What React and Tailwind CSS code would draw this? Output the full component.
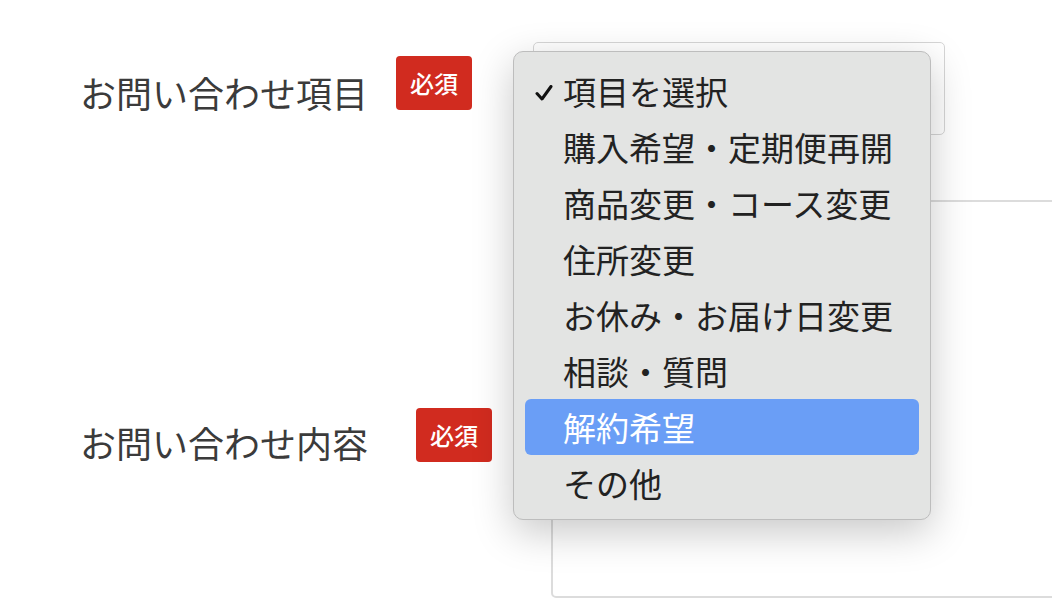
const items = [
  "項目を選択",
  "購入希望・定期便再開",
  "商品変更・コース変更",
  "住所変更",
  "お休み・お届け日変更",
  "相談・質問",
  "解約希望",
  "その他",
];

function Badge({ className }) {
  return (
    <span
      className={`flex h-[54px] w-[76px] shrink-0 items-center justify-center rounded-[4px] bg-[#d12b1f] text-[24px] font-medium text-white ${className}`}
    >
      必須
    </span>
  );
}

export default function App() {
  return (
    <div
      className="relative h-[598px] w-[1052px] overflow-hidden bg-white text-[#3b3b3b]"
      style={{ fontFamily: '"Noto Sans CJK JP", "Noto Sans", sans-serif' }}
    >
      {/* row 1 */}
      <div className="mt-[42px] flex items-start">
        <div className="flex w-[533px] shrink-0 items-start pl-[80px]">
          <span className="mt-[24px] text-[36px] leading-[52px]">お問い合わせ項目</span>
          <Badge className="ml-[28px] mt-[14px]" />
        </div>
        <div className="h-[93px] w-[412px] shrink-0 rounded-[5px] border border-[#d6d6d6] bg-white" />
      </div>

      {/* row 2 */}
      <div className="mt-[65px] flex items-start">
        <div className="flex w-[551px] shrink-0 items-start pl-[80px]">
          <span className="mt-[216px] text-[36px] leading-[52px]">お問い合わせ内容</span>
          <Badge className="ml-[48px] mt-[208px]" />
        </div>
        <div className="h-[398px] w-[600px] shrink-0 rounded-[5px] border-2 border-[#dcdcdc] bg-white" />
      </div>

      {/* open dropdown menu */}
      <div className="absolute left-[513px] top-[51px] h-[469px] w-[418px] rounded-[10px] border border-[#bdbdbd] bg-[#e3e4e3] pt-[11px] shadow-[0_12px_40px_rgba(0,0,0,0.22)]">
        {items.map((label, i) => (
          <div
            key={label}
            className={`relative mx-[11px] flex h-[56px] items-center rounded-[6px] pl-[38px] text-[33px] ${
              i === 6 ? "bg-[#6a9ef6] text-white" : "text-[#222]"
            }`}
          >
            {i === 0 && (
              <svg className="absolute left-[10px] top-[22px] h-[16px] w-[18px]" viewBox="0 0 18 16" fill="none">
                <path d="M2 8.5 L7 14 L16 1.5" stroke="#111" strokeWidth="3" strokeLinecap="round" strokeLinejoin="round" />
              </svg>
            )}
            <span className="leading-none">{label}</span>
          </div>
        ))}
      </div>
    </div>
  );
}
